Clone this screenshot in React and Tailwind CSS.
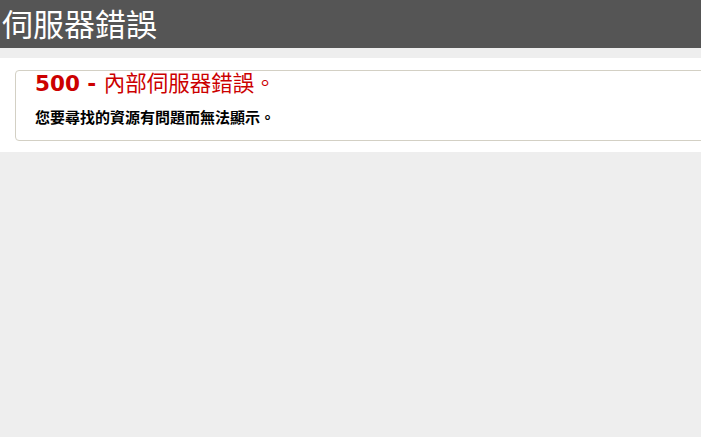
import React from 'react';

const App = () => {
  return (
    <div className="min-h-screen bg-[#eeeeee] font-['DejaVu_Sans','Noto_Sans_CJK_TC',sans-serif]">
      {/* Header */}
      <div className="h-12 bg-[#555555] pl-[2px]">
        <h1 className="text-[31px] leading-[45px] font-normal text-white font-['Noto_Sans_CJK_TC',sans-serif]">
          伺服器錯誤
        </h1>
      </div>

      {/* Content */}
      <div className="mt-[10px] overflow-hidden bg-white pt-3 pb-[11px] pl-[15px]">
        <div className="-mr-6 rounded-[4px] border border-[#d3d0c4] pl-[19px] pb-[14px]">
          <h2 className="text-[21.5px] leading-[22px] text-[#cc0000]">
            <span className="font-bold">500 - </span>
            <span className="font-normal font-['Noto_Sans_CJK_TC',sans-serif]">內部伺服器錯誤。</span>
          </h2>
          <h3 className="mt-[13px] text-[15px] leading-[18px] font-bold text-black font-['Noto_Sans_CJK_TC',sans-serif]">
            您要尋找的資源有問題而無法顯示。
          </h3>
        </div>
      </div>
    </div>
  );
};

export default App;
